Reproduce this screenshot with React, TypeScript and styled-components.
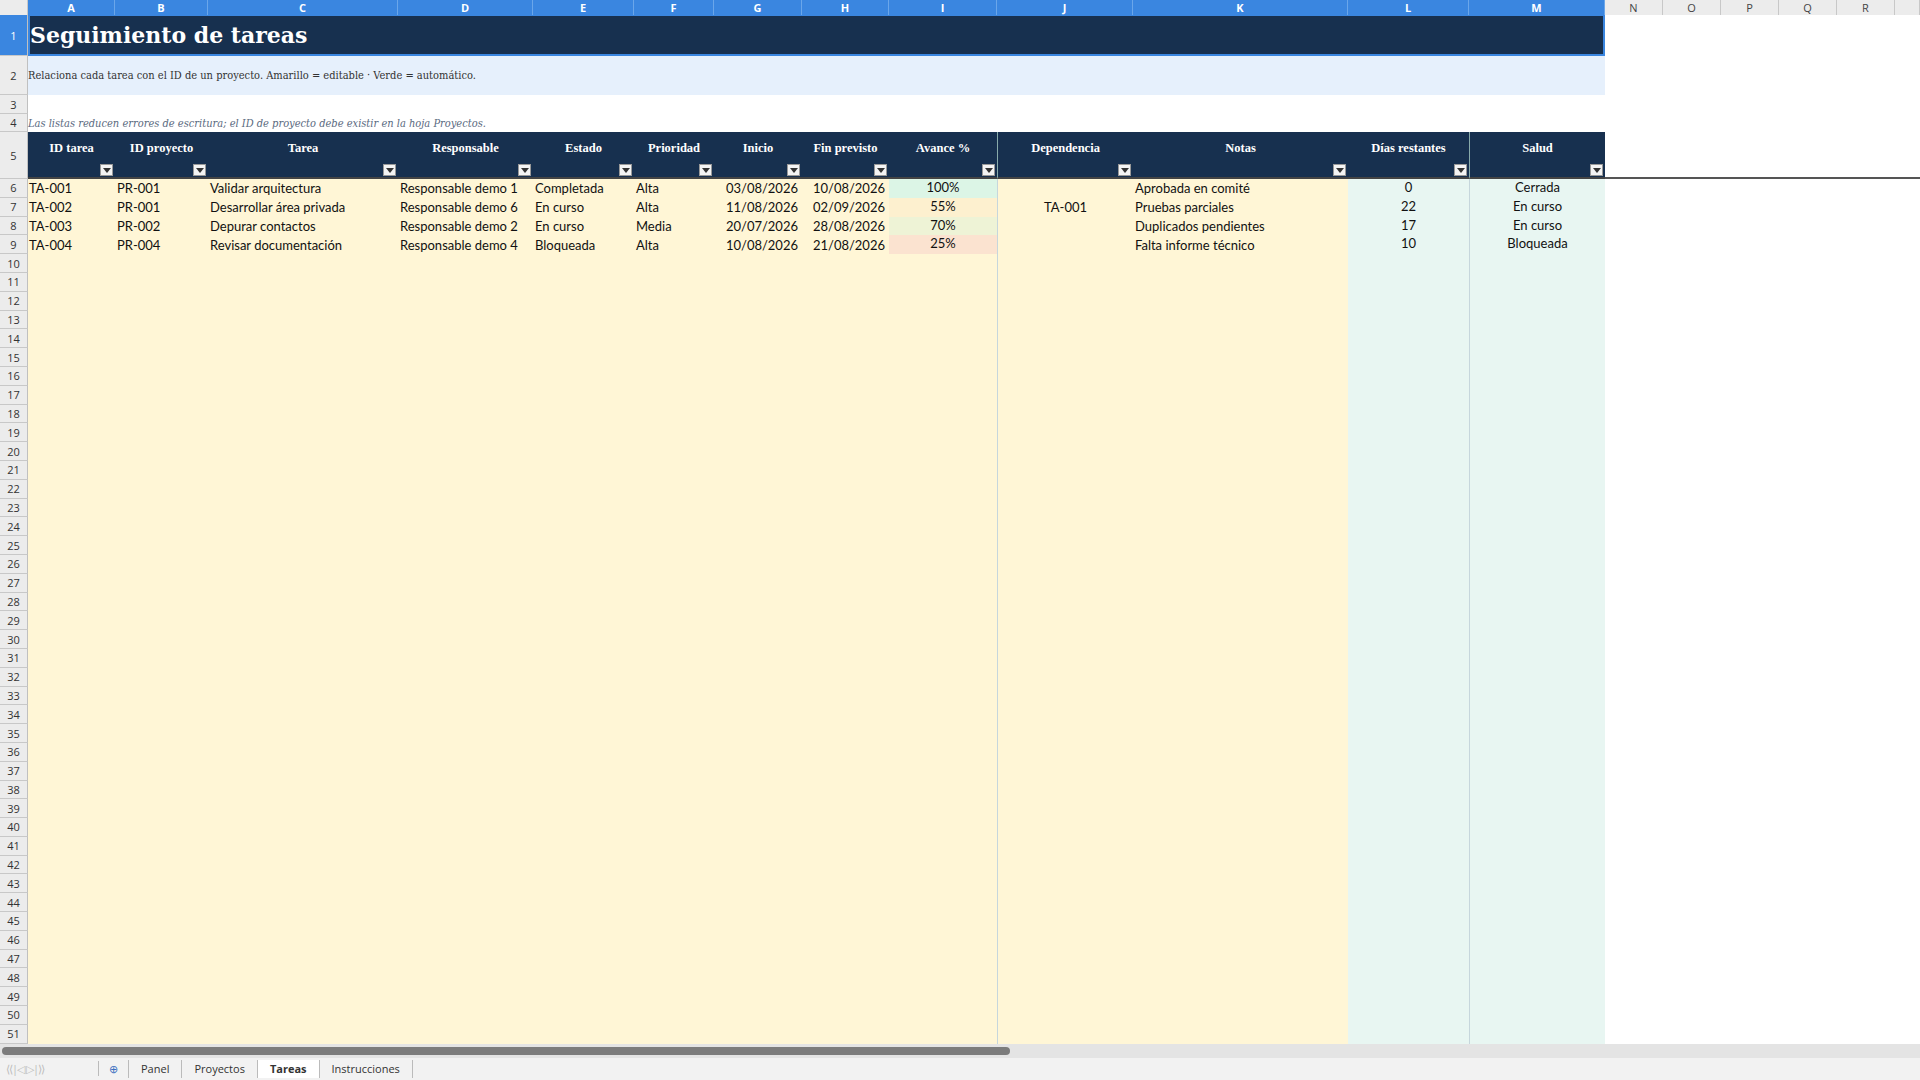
import React from "react";
import styled, { createGlobalStyle } from "styled-components";

const G = createGlobalStyle`
  html,body{margin:0;padding:0;width:1920px;height:1080px;overflow:hidden;background:#fff;font-family:Lato,"Noto Sans",sans-serif;}
`;

const COLS = "28px 87px 93px 190px 135px 101px 80px 88px 87px 108px 136px 215px 121px 136px 58px 58px 58px 58px 58px 1fr";
const letters = ["A","B","C","D","E","F","G","H","I","J","K","L","M","N","O","P","Q","R"];

const Page = styled.div`display:flex;flex-direction:column;width:1920px;height:1080px;`;
const Row = styled.div<{ $h: number }>`display:grid;grid-template-columns:${COLS};height:${p => p.$h}px;`;
const RowHead = styled.div<{ $sel?: boolean }>`
  background:${p => p.$sel ? "#3a86e0" : "#ececec"};color:${p => p.$sel ? "#fff" : "#333"};
  border-bottom:1px solid #c8c8c8;border-right:1px solid #c0c0c0;box-sizing:border-box;
  display:flex;align-items:center;justify-content:center;font-size:11px;font-family:"Open Sans",sans-serif;`;
const ColHead = styled.div<{ $sel?: boolean }>`
  background:${p => p.$sel ? "#3a86e0" : "#ececec"};color:${p => p.$sel ? "#fff" : "#444"};
  border-right:1px solid ${p => p.$sel ? "#6aa6ea" : "#c8c8c8"};border-bottom:1px solid #b8b8b8;box-sizing:border-box;
  display:flex;align-items:center;justify-content:center;font-size:11px;font-weight:${p => p.$sel ? 700 : 400};font-family:"Open Sans",sans-serif;`;
const Title = styled.div`
  grid-column:2 / span 13;background:#17304f;color:#fff;border:2px solid #3a86e0;border-top:1px solid #3a86e0;box-sizing:border-box;
  font-family:"DejaVu Serif",serif;font-weight:700;font-size:22px;display:flex;align-items:center;padding-left:0;`;
const Note = styled.div<{ $bg?: string; $italic?: boolean }>`
  grid-column:2 / span 13;background:${p => p.$bg || "#fff"};display:flex;align-items:center;
  font-family:"DejaVu Serif Condensed","DejaVu Serif",serif;font-size:11px;color:${p => p.$italic ? "#5a6a80" : "#333"};
  font-style:${p => p.$italic ? "italic" : "normal"};`;
const Blank = styled.div<{ $bg?: string; $span?: number }>`background:${p => p.$bg || "#fff"};${p => p.$span ? `grid-column:span ${p.$span};` : ""}`;
const Head = styled.div<{ $line?: boolean }>`
  position:relative;background:#17304f;color:#fff;font-family:"Liberation Serif",serif;font-weight:700;font-size:12.5px;
  display:flex;align-items:center;justify-content:center;padding-bottom:12px;box-sizing:border-box;
  border-bottom:2px solid #444;${p => p.$line ? "border-left:1px solid #8aa;" : ""}`;
const Drop = styled.span`
  position:absolute;right:2px;bottom:1px;width:13px;height:12px;background:#f4f4f4;border:1px solid #999;box-sizing:border-box;
  display:flex;align-items:center;justify-content:center;
  &::after{content:"";border-left:4px solid transparent;border-right:4px solid transparent;border-top:5px solid #333;}`;
const Cell = styled.div<{ $bg: string; $align?: string; $line?: boolean; $up?: boolean }>`
  background:${p => p.$bg};font-size:13px;color:#111;display:flex;align-items:${p => p.$up ? "flex-start" : "center"};
  justify-content:${p => p.$align || "flex-start"};padding:0 2px;white-space:nowrap;overflow:hidden;box-sizing:border-box;
  font-family:Lato,"Noto Sans",sans-serif;${p => p.$line ? "border-left:1px solid #c6d6dc;" : ""}`;
const Bottom = styled.div`flex:1;display:flex;flex-direction:column;background:#f2f2f2;`;
const Scroll = styled.div`height:14px;background:#e4e4e4;display:flex;align-items:center;padding-left:2px;`;
const Thumb = styled.div`width:1008px;height:8px;border-radius:4px;background:#7c7c7c;`;
const Tabs = styled.div`flex:1;display:flex;align-items:center;font-size:11px;font-family:"Open Sans",sans-serif;color:#333;`;
const Nav = styled.div`width:92px;color:#bbb;font-size:11px;padding-left:6px;letter-spacing:-1px;border-right:1px solid #bbb;`;
const Tab = styled.div<{ $on?: boolean }>`padding:0 12px;font-weight:${p => p.$on ? 700 : 400};border-right:1px solid #bbb;
  background:${p => p.$on ? "#fff" : "transparent"};line-height:18px;`;

const Y = "#fff6d6", GR = "#e8f6f2";
const headers = ["ID tarea","ID proyecto","Tarea","Responsable","Estado","Prioridad","Inicio","Fin previsto","Avance %","Dependencia","Notas","Días restantes","Salud"];
const data = [
  ["TA-001","PR-001","Validar arquitectura","Responsable demo 1","Completada","Alta","03/08/2026","10/08/2026","100%","","Aprobada en comité","0","Cerrada"],
  ["TA-002","PR-001","Desarrollar área privada","Responsable demo 6","En curso","Alta","11/08/2026","02/09/2026","55%","TA-001","Pruebas parciales","22","En curso"],
  ["TA-003","PR-002","Depurar contactos","Responsable demo 2","En curso","Media","20/07/2026","28/08/2026","70%","","Duplicados pendientes","17","En curso"],
  ["TA-004","PR-004","Revisar documentación","Responsable demo 4","Bloqueada","Alta","10/08/2026","21/08/2026","25%","","Falta informe técnico","10","Bloqueada"],
];
const avBg = ["#dcf5e6","#fdf0cf","#eef3d6","#fbe3d0"];
const aligns = ["flex-start","flex-start","flex-start","flex-start","flex-start","flex-start","flex-end","flex-end","center","center","flex-start","center","center"];

export default function App() {
  const rows = [];
  for (let r = 6; r <= 51; r++) {
    const d = data[r - 6];
    rows.push(
      <Row key={r} $h={18.8}>
        <RowHead>{r}</RowHead>
        {Array.from({ length: 13 }).map((_, i) => {
          let bg = i >= 11 ? GR : Y;
          if (d && i === 8) bg = avBg[r - 6];
          return (
            <Cell key={i} $bg={bg} $align={aligns[i]} $line={i === 9 || i === 12} $up={i === 8 || i >= 11}
              style={i === 6 || i === 7 ? { paddingRight: 4 } : i === 0 ? { paddingLeft: 1 } : undefined}>
              {d ? d[i] : ""}
            </Cell>
          );
        })}
        <Blank $span={6} />
      </Row>
    );
  }
  return (
    <Page>
      <G />
      <Row $h={15}>
        <ColHead />
        {letters.map((l, i) => <ColHead key={l} $sel={i < 13}>{l}</ColHead>)}
        <ColHead />
      </Row>
      <Row $h={41}><RowHead $sel>1</RowHead><Title>Seguimiento de tareas</Title><Blank $span={6} /></Row>
      <Row $h={39}><RowHead>2</RowHead><Note $bg="#e6f0fc">Relaciona cada tarea con el ID de un proyecto. Amarillo = editable · Verde = automático.</Note><Blank $span={6} /></Row>
      <Row $h={19}><RowHead>3</RowHead><Note /><Blank $span={6} /></Row>
      <Row $h={18}><RowHead>4</RowHead><Note $italic>Las listas reducen errores de escritura; el ID de proyecto debe existir en la hoja Proyectos.</Note><Blank $span={6} /></Row>
      <Row $h={47}>
        <RowHead>5</RowHead>
        {headers.map((h, i) => <Head key={h} $line={i === 9 || i === 12}>{h}<Drop /></Head>)}
        <Blank $span={6} style={{ borderBottom: "2px solid #555" }} />
      </Row>
      {rows}
      <Bottom>
        <Scroll><Thumb /></Scroll>
        <Tabs>
          <Nav>⟨⟨|◁ ▷|⟩⟩</Nav>
          <Tab style={{ color: "#3a6fc0", padding: "0 10px" }}>⊕</Tab>
          <Tab>Panel</Tab><Tab>Proyectos</Tab><Tab $on>Tareas</Tab><Tab>Instrucciones</Tab>
        </Tabs>
      </Bottom>
    </Page>
  );
}
